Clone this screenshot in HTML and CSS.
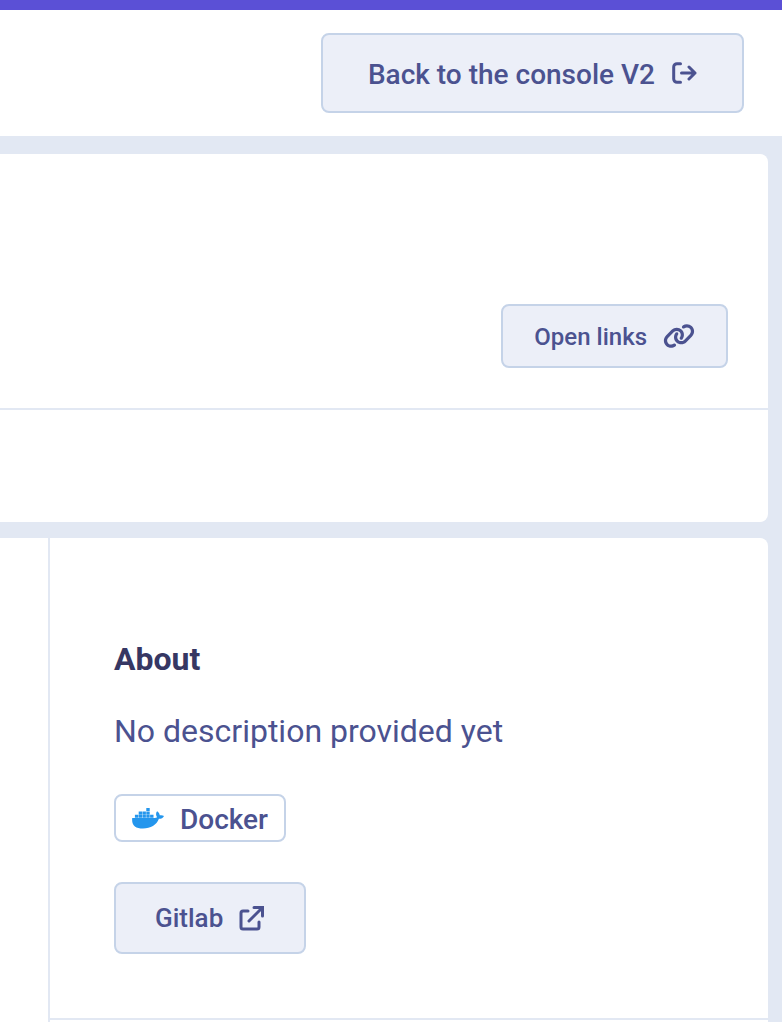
FILE: index.html
```html
<!DOCTYPE html>
<html lang="en">
<head>
<meta charset="utf-8">
<meta name="viewport" content="width=device-width, initial-scale=1">
<title>Console</title>
<link rel="stylesheet" href="styles.css">
</head>
<body>
<header class="topbar">
  <button class="button button-large" type="button">
    <span class="label">Back to the console V2</span>
    <svg class="icon-exit" viewBox="0 0 25 22" aria-hidden="true"><path d="M8.500 1.700H5a3.300 3.300 0 0 0-3.300 3.300v12A3.300 3.300 0 0 0 5 20.300h3.500M9.500 11H23M17 5l6 6-6 6"/></svg>
  </button>
</header>
<main class="page">
  <section class="card">
    <div class="card-head">
      <button class="button button-medium" type="button">
        <span class="label">Open links</span>
        <svg class="icon-link" viewBox="0 0 640 512" aria-hidden="true"><path d="M579.8 267.7c56.5-56.5 56.5-148 0-204.5c-50-50-128.8-56.5-186.3-15.4l-1.6 1.1c-14.4 10.3-17.7 30.3-7.4 44.6s30.3 17.7 44.6 7.4l1.6-1.1c32.1-22.9 76-19.3 103.8 8.6c31.5 31.5 31.5 82.5 0 114L422.3 334.8c-31.5 31.5-82.5 31.5-114 0c-27.9-27.9-31.5-71.8-8.6-103.8l1.1-1.6c10.3-14.4 6.9-34.4-7.4-44.6s-34.4-6.9-44.6 7.4l-1.1 1.6C206.5 251.2 213 330 263 380c56.5 56.5 148 56.5 204.5 0L579.8 267.7zM60.2 244.3c-56.5 56.5-56.5 148 0 204.5c50 50 128.8 56.5 186.3 15.4l1.6-1.1c14.4-10.3 17.7-30.3 7.4-44.6s-30.3-17.7-44.6-7.4l-1.6 1.1c-32.1 22.9-76 19.3-103.8-8.6C74 372 74 321 105.5 289.5L217.7 177.2c31.5-31.5 82.5-31.5 114 0c27.9 27.9 31.5 71.8 8.6 103.9l-1.1 1.6c-10.3 14.4-6.9 34.4 7.4 44.6s34.4 6.9 44.6-7.4l1.1-1.6C433.5 260.8 427 182 377 132c-56.5-56.5-148-56.5-204.5 0L60.2 244.3z"/></svg>
      </button>
    </div>
    <div class="card-tabs"></div>
  </section>
  <section class="card card-split">
    <div class="content"></div>
    <aside class="sidebar">
      <div class="about">
        <h2 class="about-title">About</h2>
        <p class="about-text">No description provided yet</p>
        <span class="tag">
          <svg class="icon-docker" viewBox="0 0 32 22" aria-hidden="true"><path d="M14.300 1h3.400v3h-3.400zM6.700 4.400h3.400v3H6.700zM10.500 4.400h3.400v3h-3.400zM14.300 4.400h3.400v3h-3.400zM2.900 7.800h3.400v3H2.900zM6.700 7.800h3.400v3H6.700zM10.500 7.800h3.400v3h-3.400zM14.300 7.800h3.400v3h-3.400zM18.100 7.800h3.400v3h-3.400zM.2 11.100H22c1.400 0 2.500-.3 3.100-.8-1.500-2-1.300-4.500 0-6 1.500 1 2.500 2.300 2.600 4 1.500-.3 3.200-.1 4.300.6-.9 2-2.600 2.900-5.100 2.900C24.500 18 18.800 21.500 11 21.500 3.500 21.500-.5 18.500.2 11.100z"/></svg>
          <span class="label">Docker</span>
        </span>
        <a class="button button-link" href="#">
          <span>Gitlab</span>
          <svg class="icon-external" viewBox="0 0 26 26" aria-hidden="true"><path d="M9 6H4a2 2 0 0 0-2 2v14a2 2 0 0 0 2 2h14a2 2 0 0 0 2-2v-5"/><path d="M10 16 23 3"/><path class="corner" d="M15 2.500h8.500V11"/></svg>
        </a>
      </div>
    </aside>
  </section>
</main>
</body>
</html>
```
FILE: styles.css
```css
* { box-sizing: border-box; }

body {
  margin: 0;
  min-height: 100vh;
  display: flex;
  flex-direction: column;
  background: #e2e8f3;
  color: #4b5290;
  font-family: Roboto, "Liberation Sans", sans-serif;
}

.topbar {
  display: flex;
  justify-content: flex-end;
  padding: 23px 38px;
  background: #fff;
  border-top: 10px solid #5b50d6;
}

.button {
  display: inline-flex;
  align-items: center;
  justify-content: center;
  gap: 16px;
  background: #eceff8;
  border: 2px solid #c5d3e8;
  border-radius: 8px;
  color: #4b5290;
  font-family: inherit;
  font-weight: 500;
  text-decoration: none;
  white-space: nowrap;
  cursor: pointer;
}

.label { padding-top: 2px; }

.button-large { height: 80px; padding: 0 45px; font-size: 28px; }
.button-medium { height: 64px; padding: 0 31px; font-size: 24px; }
.button-link { height: 72px; padding: 0 39px; font-size: 26px; }

.icon-exit, .icon-external {
  fill: none;
  stroke: currentColor;
  stroke-width: 3;
  stroke-linecap: round;
  stroke-linejoin: round;
}

.icon-exit { width: 25px; height: 22px; }
.icon-external { width: 26px; height: 26px; }
.button-large { gap: 17px; }
.corner { stroke-linejoin: miter; }
.icon-link { width: 32px; height: 26px; fill: currentColor; }
.icon-docker { width: 32px; height: 22px; fill: #2496ed; }

.page {
  flex: 1;
  display: flex;
  flex-direction: column;
  gap: 16px;
  padding: 18px 14px 0 0;
}

.card { background: #fff; border-radius: 0 8px 8px 0; }

.card-head {
  display: flex;
  justify-content: flex-end;
  padding: 150px 40px 40px;
  border-bottom: 2px solid #e2e8f3;
}

.card-tabs { height: 112px; }

.card-split {
  flex: 1;
  display: grid;
  grid-template-columns: 48px 1fr;
  border-radius: 0 8px 0 0;
}

.sidebar { border-left: 2px solid #e2e8f3; }

.about {
  display: flex;
  flex-direction: column;
  align-items: flex-start;
  padding: 101px 64px 64px;
  border-bottom: 2px solid #e2e8f3;
}

.about-title {
  margin: 0 0 30px;
  color: #363763;
  font-size: 32px;
  line-height: 40px;
  font-weight: 700;
}

.about-text {
  margin: 0 0 41px;
  font-size: 32px;
  line-height: 44px;
}

.tag {
  display: inline-flex;
  align-items: center;
  gap: 16px;
  height: 48px;
  margin-bottom: 40px;
  padding: 0 16px;
  border: 2px solid #c5d3e8;
  border-radius: 8px;
  font-size: 28px;
  font-weight: 500;
}
```
